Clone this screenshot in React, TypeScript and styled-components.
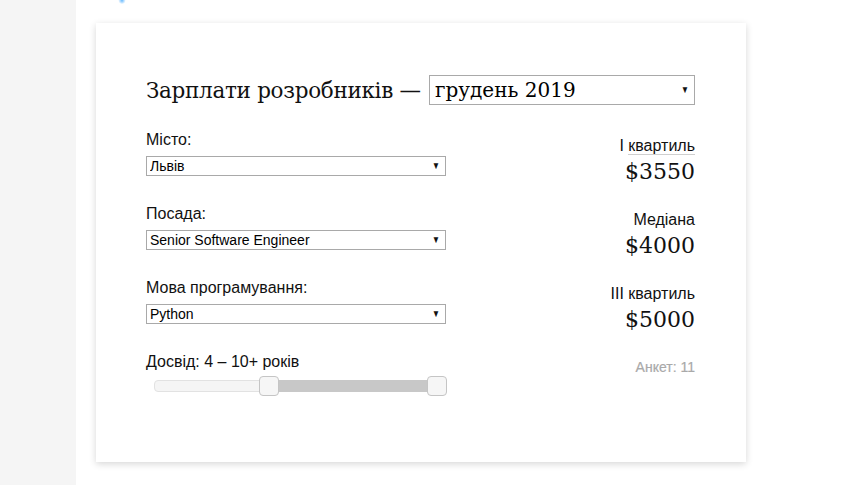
import { useState } from 'react';
import styled, { createGlobalStyle } from 'styled-components';

const GlobalStyle = createGlobalStyle`
  html, body {
    margin: 0;
    padding: 0;
    background: #ffffff;
  }
  body {
    font-family: "Liberation Sans", Arial, sans-serif;
    color: #111;
  }
`;

const EXP_MIN = 0;
const EXP_MAX = 10;
const TRACK_WIDTH = 293;
const HANDLE_WIDTH = 20;

const stats = [
  { label: 'І', rest: 'квартиль', value: '$3550', marked: true },
  { label: 'Медіана', rest: '', value: '$4000', marked: false },
  { label: 'ІІІ', rest: 'квартиль', value: '$5000', marked: false },
];

const App = () => {
  const [from] = useState(3.85);
  const [to] = useState(10);

  const pos = (v: number) =>
    ((v - EXP_MIN) / (EXP_MAX - EXP_MIN)) * (TRACK_WIDTH - HANDLE_WIDTH);

  return (
    <>
      <GlobalStyle />
      <Page>
        <Sidebar />
        <Main>
          <Glow />
          <Card>
            <TitleRow>
              <Title>Зарплати розробників —</Title>
              <SelectWrap $big>
                <MonthSelect defaultValue="2019-12">
                  <option value="2019-12">грудень 2019</option>
                  <option value="2019-06">червень 2019</option>
                </MonthSelect>
                <Arrow $big>▼</Arrow>
              </SelectWrap>
            </TitleRow>
            <Columns>
              <Form>
                <Field>
                  <Label>Місто:</Label>
                  <SelectWrap>
                    <Select defaultValue="lviv">
                      <option value="lviv">Львів</option>
                      <option value="kyiv">Київ</option>
                    </Select>
                    <Arrow>▼</Arrow>
                  </SelectWrap>
                </Field>
                <Field>
                  <Label>Посада:</Label>
                  <SelectWrap>
                    <Select defaultValue="sse">
                      <option value="sse">Senior Software Engineer</option>
                    </Select>
                    <Arrow>▼</Arrow>
                  </SelectWrap>
                </Field>
                <Field>
                  <Label>Мова програмування:</Label>
                  <SelectWrap>
                    <Select defaultValue="python">
                      <option value="python">Python</option>
                    </Select>
                    <Arrow>▼</Arrow>
                  </SelectWrap>
                </Field>
                <Field>
                  <Label>Досвід: 4 – 10+ років</Label>
                  <Slider>
                    <Track />
                    <Range
                      style={{
                        left: pos(from) + HANDLE_WIDTH / 2,
                        width: pos(to) - pos(from),
                      }}
                    />
                    <Handle style={{ left: pos(from) }} />
                    <Handle style={{ left: pos(to) }} />
                  </Slider>
                </Field>
              </Form>
              <Stats>
                {stats.map((s) => (
                  <Stat key={s.value}>
                    <StatLabel>
                      {s.label}
                      {s.rest && ' '}
                      {s.rest && <Underlined $marked={s.marked}>{s.rest}</Underlined>}
                    </StatLabel>
                    <StatValue>{s.value}</StatValue>
                  </Stat>
                ))}
                <Count>Анкет: 11</Count>
              </Stats>
            </Columns>
          </Card>
        </Main>
      </Page>
    </>
  );
};

const Page = styled.div`
  display: flex;
  min-height: 485px;
`;

const Sidebar = styled.div`
  width: 76px;
  flex-shrink: 0;
  background: #f5f5f5;
`;

const Main = styled.div`
  position: relative;
  flex: 1;
  padding: 23px 0 0 20px;
`;

const Glow = styled.div`
  position: absolute;
  left: 42px;
  top: -3px;
  width: 8px;
  height: 7px;
  border-radius: 50%;
  background: radial-gradient(circle, rgba(90, 180, 255, 0.9), rgba(190, 225, 255, 0) 70%);
`;

const Card = styled.div`
  width: 650px;
  height: 439px;
  box-sizing: border-box;
  padding: 52px 51px 0 50px;
  background: #fff;
  box-shadow: 0 2px 7px rgba(0, 0, 0, 0.16);
`;

const TitleRow = styled.div`
  display: flex;
  align-items: center;
  justify-content: space-between;
  height: 30px;
`;

const Title = styled.h1`
  margin: 0;
  font-family: "DejaVu Serif", Georgia, serif;
  font-weight: normal;
  font-size: 21.5px;
  letter-spacing: -0.3px;
  color: #111;
  white-space: nowrap;
`;

const SelectWrap = styled.div<{ $big?: boolean }>`
  position: relative;
  width: ${(p) => (p.$big ? '266px' : '300px')};
`;

const Select = styled.select`
  display: block;
  width: 100%;
  height: 20px;
  box-sizing: border-box;
  padding: 0 0 0 3px;
  appearance: none;
  border: 1px solid #a9a9a9;
  border-radius: 0;
  background: #fff;
  font-family: "Liberation Sans", Arial, sans-serif;
  font-size: 14px;
  color: #000;
  outline: none;
`;

const MonthSelect = styled(Select)`
  height: 30px;
  padding-left: 5px;
  font-family: "DejaVu Serif", Georgia, serif;
  font-size: 20px;
`;

const Arrow = styled.span<{ $big?: boolean }>`
  position: absolute;
  right: ${(p) => (p.$big ? '5px' : '5px')};
  top: 50%;
  transform: translateY(-50%) scaleX(0.8);
  font-size: 10px;
  line-height: 1;
  color: #111;
  pointer-events: none;
`;

const Columns = styled.div`
  display: flex;
  justify-content: space-between;
`;

const Form = styled.div`
  display: flex;
  flex-direction: column;
  padding-top: 26px;
  gap: 29px;
`;

const Field = styled.div`
  display: flex;
  flex-direction: column;
  gap: 7px;
`;

const Label = styled.div`
  font-size: 16px;
  line-height: 18px;
  color: #111;
`;

const Slider = styled.div`
  position: relative;
  margin: -2px 0 0 8px;
  width: ${TRACK_WIDTH}px;
  height: 19px;
`;

const Track = styled.div`
  position: absolute;
  left: 0;
  right: 0;
  top: 4px;
  height: 12px;
  box-sizing: border-box;
  background: #f5f5f5;
  border: 1px solid #e2e2e2;
  border-radius: 4px;
`;

const Range = styled.div`
  position: absolute;
  top: 4px;
  height: 12px;
  background: #c8c8c8;
`;

const Handle = styled.div`
  position: absolute;
  top: 0;
  width: ${HANDLE_WIDTH}px;
  height: 20px;
  box-sizing: border-box;
  background: #f6f6f6;
  border: 1px solid #c5c5c5;
  border-radius: 4px;
`;

const Stats = styled.div`
  display: flex;
  flex-direction: column;
  align-items: flex-end;
  padding-top: 32px;
`;

const Stat = styled.div`
  display: flex;
  flex-direction: column;
  align-items: flex-end;
  margin-bottom: 23px;
`;

const StatLabel = styled.div`
  font-size: 16px;
  line-height: 18px;
  color: #111;
`;

const Underlined = styled.span<{ $marked: boolean }>`
  border-bottom: 1px solid ${(p) => (p.$marked ? '#cfcfcf' : 'transparent')};
`;

const StatValue = styled.div`
  font-family: "DejaVu Serif", Georgia, serif;
  font-size: 22px;
  line-height: 33px;
  color: #111;
`;

const Count = styled.div`
  margin-top: -1px;
  font-size: 14px;
  line-height: 18px;
  color: #a9a9a9;
  -webkit-text-stroke: 0.2px #a9a9a9;
`;

export default App;
